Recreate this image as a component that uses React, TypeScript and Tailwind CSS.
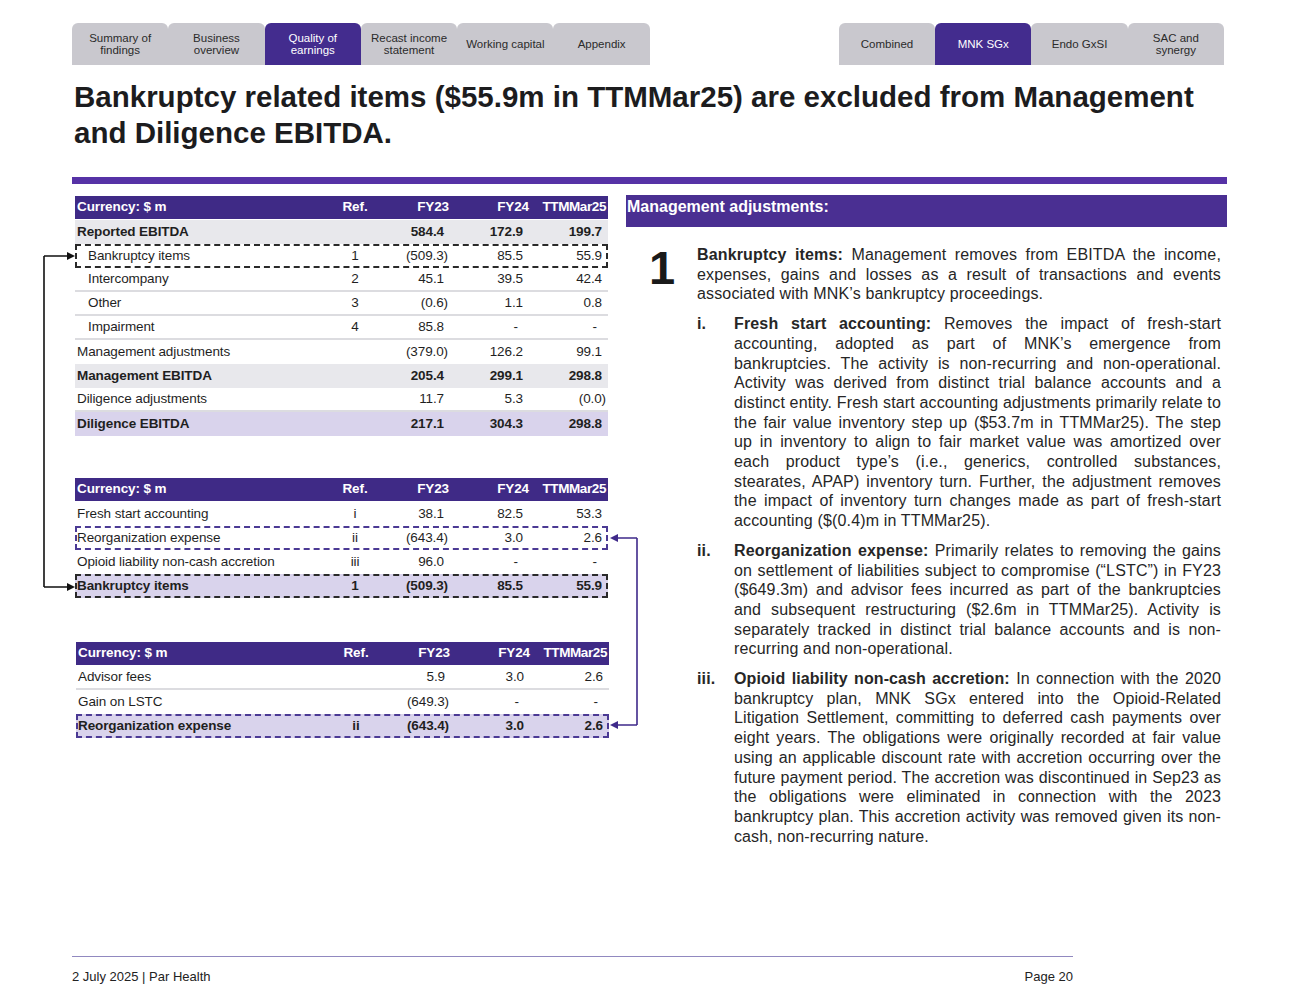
import React from "react";

type Row = {
  label: string;
  ref?: string;
  v: [string, string, string];
  bold?: boolean;
  indent?: boolean;
  fill?: "gray" | "purple";
  dashed?: "dark" | "purple";
  line?: boolean;
};

const leftTabs = [
  ["Summary of", "findings"],
  ["Business", "overview"],
  ["Quality of", "earnings"],
  ["Recast income", "statement"],
  ["Working capital"],
  ["Appendix"],
];

const rightTabs = [["Combined"], ["MNK SGx"], ["Endo GxSI"], ["SAC and", "synergy"]];

const table1: Row[] = [
  { label: "Reported EBITDA", v: ["584.4", "172.9", "199.7"], bold: true, fill: "gray" },
  { label: "Bankruptcy items", ref: "1", v: ["(509.3)", "85.5", "55.9"], indent: true, dashed: "dark" },
  { label: "Intercompany", ref: "2", v: ["45.1", "39.5", "42.4"], indent: true, line: true },
  { label: "Other", ref: "3", v: ["(0.6)", "1.1", "0.8"], indent: true, line: true },
  { label: "Impairment", ref: "4", v: ["85.8", "-", "-"], indent: true, line: true },
  { label: "Management adjustments", v: ["(379.0)", "126.2", "99.1"] },
  { label: "Management EBITDA", v: ["205.4", "299.1", "298.8"], bold: true, fill: "gray" },
  { label: "Diligence adjustments", v: ["11.7", "5.3", "(0.0)"], line: true },
  { label: "Diligence EBITDA", v: ["217.1", "304.3", "298.8"], bold: true, fill: "purple" },
];

const table2: Row[] = [
  { label: "Fresh start accounting", ref: "i", v: ["38.1", "82.5", "53.3"] },
  { label: "Reorganization expense", ref: "ii", v: ["(643.4)", "3.0", "2.6"], dashed: "purple" },
  { label: "Opioid liability non-cash accretion", ref: "iii", v: ["96.0", "-", "-"] },
  { label: "Bankruptcy items", ref: "1", v: ["(509.3)", "85.5", "55.9"], bold: true, fill: "purple", dashed: "dark" },
];

const table3: Row[] = [
  { label: "Advisor fees", v: ["5.9", "3.0", "2.6"], line: true },
  { label: "Gain on LSTC", v: ["(649.3)", "-", "-"] },
  { label: "Reorganization expense", ref: "ii", v: ["(643.4)", "3.0", "2.6"], bold: true, fill: "purple", dashed: "purple" },
];

function Tab({ lines, active }: { lines: string[]; active?: boolean }) {
  return (
    <div
      className={
        "w-[96.3px] h-[42px] rounded-t-[6px] flex flex-col items-center justify-center text-center text-[11.5px] leading-[12px] " +
        (active ? "bg-[#432c8e] text-white" : "bg-[#c9c8ce] text-[#2b2b2b]")
      }
    >
      {lines.map((l) => (
        <span key={l}>{l}</span>
      ))}
    </div>
  );
}

function Num({ value }: { value: string }) {
  if (value.startsWith("(")) return <span className="mr-[-4px]">{value}</span>;
  if (value === "-") return <span className="mr-[5px]">-</span>;
  return <span>{value}</span>;
}

function Table({ rows }: { rows: Row[] }) {
  return (
    <div className="w-[533px] text-[13.5px] tracking-[-0.1px] text-[#1f1f1f]">
      <div className="grid grid-cols-[245px_70px_59px_80px_79px] h-[23px] items-center bg-[#3f2a86] text-white font-bold mb-px">
        <div className="pl-[2px]">Currency: $ m</div>
        <div className="text-center">Ref.</div>
        <div className="text-right">FY23</div>
        <div className="text-right">FY24</div>
        <div className="text-right pr-[2px] tracking-[-0.4px]">TTMMar25</div>
      </div>
      {rows.map((r) => (
        <div
          key={r.label + r.v[0]}
          className={
            "grid grid-cols-[245px_70px_59px_80px_79px] h-[24px] items-center " +
            (r.bold ? "font-bold " : "") +
            (r.fill === "gray" ? "bg-[#e8e8ec] " : r.fill === "purple" ? "bg-[#d9d3ec] " : "") +
            (r.line ? "border-b-2 border-[#dcdce0] " : "") +
            (r.dashed === "dark"
              ? "outline-2 outline-dashed outline-[#2a2a2a] -outline-offset-2"
              : r.dashed === "purple"
              ? "outline-2 outline-dashed outline-[#4b3a94] -outline-offset-2"
              : "")
          }
        >
          <div className={r.indent ? "pl-[13px]" : "pl-[2px]"}>{r.label}</div>
          <div className="text-center">{r.ref}</div>
          <div className="text-right pr-[5px]">
            <Num value={r.v[0]} />
          </div>
          <div className="text-right pr-[6px]">
            <Num value={r.v[1]} />
          </div>
          <div className="text-right pr-[6px]">
            <Num value={r.v[2]} />
          </div>
        </div>
      ))}
    </div>
  );
}

function Item({
  mark,
  title,
  tight,
  children,
}: {
  mark: string;
  title: string;
  tight?: boolean;
  children: React.ReactNode;
}) {
  return (
    <div className="flex">
      <div className="w-[37px] shrink-0 font-bold">{mark}</div>
      <p className={"w-[487px] text-justify " + (tight ? "tracking-[0.1px]" : "")}>
        <b>{title}</b> {children}
      </p>
    </div>
  );
}

export default function App() {
  return (
    <div
      className="relative w-[1300px] h-[1005px] bg-white flex flex-col overflow-hidden text-[#222]"
      style={{ fontFamily: '"Liberation Sans", Arial, sans-serif' }}
    >
      <div className="px-[72px] pt-[23px]">
        <div className="flex w-[1152px]">
          <div className="flex">
            {leftTabs.map((t, i) => (
              <Tab key={t[0]} lines={t} active={i === 2} />
            ))}
          </div>
          <div className="flex ml-auto">
            {rightTabs.map((t, i) => (
              <Tab key={t[0]} lines={t} active={i === 1} />
            ))}
          </div>
        </div>

        <h1 className="mt-[14px] pl-[2px] text-[29.5px] leading-[36px] font-bold text-[#1c1c1e]">
          Bankruptcy related items ($55.9m in TTMMar25) are excluded from Management
          <br />
          and Diligence EBITDA.
        </h1>

        <div className="mt-[26px] h-[7px] w-[1155px] bg-[#5632a6]" />

        <div className="flex mt-[12px]">
          <div className="w-[554px] pl-[3px] flex flex-col">
            <Table rows={table1} />
            <div className="mt-[42px]">
              <Table rows={table2} />
            </div>
            <div className="mt-[44px] pl-px">
              <Table rows={table3} />
            </div>
          </div>

          <div className="w-[601px] -mt-px">
            <div className="h-[32px] bg-[#4a2f92] text-white font-bold text-[16px] leading-[20px] pt-[2px] pl-px">
              Management adjustments:
            </div>
            <div className="flex mt-[18px] text-[16px] tracking-[0.15px] leading-[19.7px] text-[#262626]">
              <div className="w-[71px] shrink-0 pl-[23px] text-[47px] leading-[40px] font-bold text-[#1a1a1a] pt-[3px]">
                1
              </div>
              <div className="w-[524px] flex flex-col gap-[10px]">
                <p className="text-justify">
                  <b>Bankruptcy items:</b> Management removes from EBITDA the income, expenses, gains and losses as a
                  result of transactions and events associated with MNK’s bankruptcy proceedings.
                </p>
                <Item mark="i." title="Fresh start accounting:">
                  Removes the impact of fresh-start accounting, adopted as part of MNK’s emergence from bankruptcies.
                  The activity is non-recurring and non-operational. Activity was derived from distinct trial balance
                  accounts and a distinct entity. Fresh start accounting adjustments primarily relate to the fair value
                  inventory step up ($53.7m in TTMMar25). The step up in inventory to align to fair market value was
                  amortized over each product type’s (i.e., generics, controlled substances, stearates, APAP) inventory
                  turn. Further, the adjustment removes the impact of inventory turn changes made as part of
                  fresh-start accounting ($(0.4)m in TTMMar25).
                </Item>
                <Item mark="ii." title="Reorganization expense:">
                  Primarily relates to removing the gains on settlement of liabilities subject to compromise (“LSTC”)
                  in FY23 ($649.3m) and advisor fees incurred as part of the bankruptcies and subsequent restructuring
                  ($2.6m in TTMMar25). Activity is separately tracked in distinct trial balance accounts and is
                  non-recurring and non-operational.
                </Item>
                <Item mark="iii." title="Opioid liability non-cash accretion:" tight>
                  In connection with the 2020 bankruptcy plan, MNK SGx entered into the Opioid-Related Litigation
                  Settlement, committing to deferred cash payments over eight years. The obligations were originally
                  recorded at fair value using an applicable discount rate with accretion occurring over the future
                  payment period. The accretion was discontinued in Sep23 as the obligations were eliminated in
                  connection with the 2023 bankruptcy plan. This accretion activity was removed given its non-cash,
                  non-recurring nature.
                </Item>
              </div>
            </div>
          </div>
        </div>
      </div>

      <div className="mt-auto ml-[72px] w-[1001px] border-t border-[#9189c0] pt-[12px] pb-[20px] flex justify-between text-[13px] leading-[16px] text-[#222]">
        <span>2 July 2025 | Par Health</span>
        <span>Page 20</span>
      </div>

      {/* connector arrows */}
      <svg className="absolute inset-0 pointer-events-none" width="1300" height="1005">
        <path d="M44 256 H68 M44 256 V587 M44 587 H68" stroke="#111" strokeWidth="1.6" fill="none" />
        <polygon points="67,252 75,256 67,260" fill="#111" />
        <polygon points="67,583 75,587 67,591" fill="#111" />
        <path d="M637 538 H617 M637 538 V725 M637 725 H617" stroke="#3f2a8a" strokeWidth="1.6" fill="none" />
        <polygon points="618,534 610,538 618,542" fill="#3f2a8a" />
        <polygon points="618,721 610,725 618,729" fill="#3f2a8a" />
      </svg>
    </div>
  );
}
